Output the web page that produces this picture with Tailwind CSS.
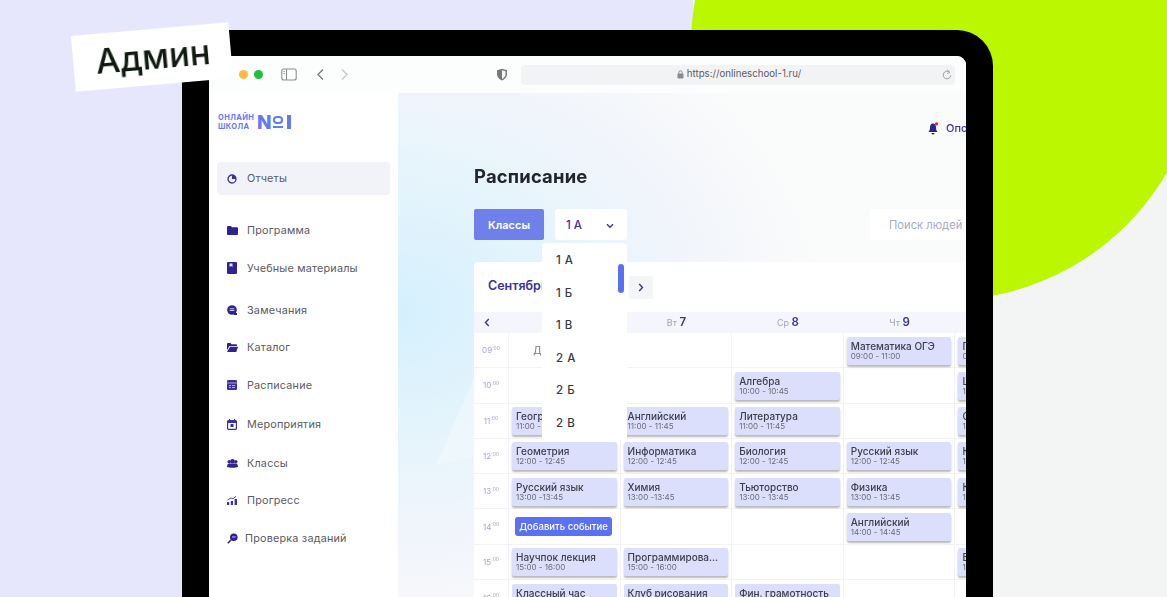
<!DOCTYPE html>
<html lang="ru">
  <head>
    <meta charset="UTF-8" />
    <script src="https://cdn.jsdelivr.net/npm/@tailwindcss/browser@4"></script>
    <title>Админ</title>
  </head>
  <body class="relative h-[597px] w-[1167px] overflow-hidden bg-[#e6e7fc] font-['Inter',sans-serif]">
    <!-- background shapes -->
    <div class="absolute inset-y-0 left-[693px] right-0 bg-[#f3f5f5]"></div>
    <div class="absolute left-[691px] top-[-210px] h-[510px] w-[510px] rounded-full bg-[#baf700]"></div>

    <!-- tablet -->
    <div class="absolute left-[182px] top-[30px] h-[567px] w-[811px] rounded-t-[36px] bg-black pl-[27px] pr-[27px] pt-[26px]">
      <div class="h-full w-full overflow-hidden rounded-t-[9px] bg-white blur-[0.35px]">
        <!-- browser bar -->
        <div class="flex h-[37px] items-center bg-[#fcfdfd] pl-[30px] pr-[11px]">
          <span class="h-[9px] w-[9px] rounded-full bg-[#fdbc40]"></span>
          <span class="ml-[6px] h-[9px] w-[9px] rounded-full bg-[#1fc13a]"></span>
          <svg class="ml-[18px] text-[#8e8e90]" width="16" height="13" viewBox="0 0 16 13" fill="none" stroke="currentColor" stroke-width="1.1"><rect x="0.8" y="1" width="14.4" height="11" rx="2"/><path d="M5.5 1v11"/><path d="M2.4 3.5h1.5M2.4 5.5h1.5" stroke-width="0.9"/></svg>
          <svg class="ml-[19px] text-[#77777a]" width="9" height="13" viewBox="0 0 9 13" fill="none" stroke="currentColor" stroke-width="1.3"><path d="M7 1.5 2 6.500l5 5"/></svg>
          <svg class="ml-[15px] text-[#c6c6c8]" width="9" height="13" viewBox="0 0 9 13" fill="none" stroke="currentColor" stroke-width="1.3"><path d="M2 1.500 7 6.500l-5 5"/></svg>
          <svg class="ml-[147px]" width="12" height="13" viewBox="0 0 12 13"><path d="M6 .8 11 2.300v4c0 3-2.300 5.200-5 6.200-2.700-1-5-3.200-5-6.200v-4z" fill="#77777a"/><path d="M6 2.200 9.500 3.300v3c0 2.200-1.600 3.800-3.500 4.700z" fill="#f4f4f4"/></svg>
          <div class="relative ml-[13px] flex h-[20px] flex-1 items-center justify-center rounded-[4px] bg-[#f2f3f4] pl-[2px] text-[9.7px] text-[#5d5d60]">
            <svg class="mr-[3px]" width="7" height="9" viewBox="0 0 7 9"><rect x="0.500" y="3.600" width="6" height="5" rx="1" fill="#8a8a8d"/><path d="M1.800 3.800V2.500a1.700 1.700 0 0 1 3.400 0v1.300" fill="none" stroke="#8a8a8d"/></svg>
            <span>https://onlineschool-1.ru/</span>
            <svg class="absolute right-[3px] top-[4px] text-[#9a9a9d]" width="10" height="12" viewBox="0 0 10 12" fill="none" stroke="currentColor" stroke-width="1"><path d="M7.700 3.300A3.800 3.800 0 1 0 8.800 6.500"/><path d="M5 .8 7.800 3.200 5 4.800" stroke-width="0.800"/></svg>
          </div>
        </div>

        <div class="flex h-full">
          <!-- sidebar -->
          <aside class="w-[189px] shrink-0 bg-white pl-[8px] pr-[8px] text-[10.8px] tracking-[0.2px] text-[#5a5a64]">
            <div class="mt-[18px] flex h-[22px] items-center pl-[1px] text-[#6479f5]">
              <div class="w-[39px] text-[7.5px] font-bold leading-[9.500px] tracking-[0.4px]">ОНЛАЙН<br />ШКОЛА</div>
              <span class="text-[19px] font-extrabold leading-none">N</span>
              <div class="ml-[1px] flex flex-col gap-[2px]">
                <span class="h-[8px] w-[10px] rounded-full border-2 border-[#6479f5]"></span>
                <span class="h-[2px] w-[10px] bg-[#6479f5]"></span>
              </div>
              <span class="ml-[4px] h-[14px] w-[4px] bg-[#6479f5]"></span>
            </div>

            <div class="mt-[29px] flex h-[33px] items-center rounded-[4px] bg-[#f2f3f9] pl-[10px]">
              <svg width="10" height="10" viewBox="0 0 10 10" class="mr-[10px]"><circle cx="5" cy="5" r="4" fill="none" stroke="#3a2f9f" stroke-width="1.300"/><path d="M5 1a4 4 0 0 1 4 4H5z" fill="#3a2f9f"/></svg>
              <span class="mt-[2px]">Отчеты</span>
            </div>

            <div class="mt-[25px] flex h-[20px] items-center pl-[10px]">
              <svg width="11" height="9" viewBox="0 0 11 9" class="mr-[9px]"><path d="M0 1a1 1 0 0 1 1-1h3l1 1.300h5a1 1 0 0 1 1 1V8a1 1 0 0 1-1 1H1a1 1 0 0 1-1-1z" fill="#2f2391"/></svg>
              <span class="mt-[2px]">Программа</span>
            </div>
            <div class="mt-[18px] flex h-[20px] items-center pl-[10px]">
              <svg width="10" height="12" viewBox="0 0 10 12" class="mr-[10px]"><path d="M1 0h8a1 1 0 0 1 1 1v10a1 1 0 0 1-1 1H1a1 1 0 0 1-1-1V1a1 1 0 0 1 1-1z" fill="#2f2391"/><path d="M2.500 1.500h3V5L4 4 2.500 5z" fill="#e8e8fb"/></svg>
              <span class="mt-[2px]">Учебные материалы</span>
            </div>
            <div class="mt-[22px] flex h-[20px] items-center pl-[10px]">
              <svg width="10" height="10" viewBox="0 0 10 10" class="mr-[10px]"><circle cx="5" cy="5" r="4.800" fill="#2f2391"/><path d="M7 8h3v2H7z" fill="#2f2391"/><path d="M2.700 3.800h4.600M2.700 5.500h4.600" stroke="#dcdcf5" stroke-width="0.900"/></svg>
              <span class="mt-[2px]">Замечания</span>
            </div>
            <div class="mt-[17px] flex h-[20px] items-center pl-[10px]">
              <svg width="11" height="9" viewBox="0 0 11 9" class="mr-[9px]"><path d="M0 1a1 1 0 0 1 1-1h2.500L4.500 1.200H9a1 1 0 0 1 1 1V3H2.500L0 7z" fill="#2f2391"/><path d="M3 3.800h8L9.300 9H0z" fill="#2f2391"/></svg>
              <span class="mt-[2px]">Каталог</span>
            </div>
            <div class="mt-[18px] flex h-[20px] items-center pl-[10px]">
              <svg width="10" height="10" viewBox="0 0 10 10" class="mr-[10px]"><rect width="10" height="10" rx="1.200" fill="#3a2f9f"/><path d="M0 3h10" stroke="#cfcff2" stroke-width="0.700"/><path d="M2 5.500h2M5 5.500h3M2 7.500h2M5 7.500h3" stroke="#cfcff2" stroke-width="0.800"/></svg>
              <span class="mt-[2px]">Расписание</span>
            </div>
            <div class="mt-[19px] flex h-[20px] items-center pl-[10px]">
              <svg width="10" height="11" viewBox="0 0 10 11" class="mr-[10px]"><path d="M2.500 0v2M7.500 0v2" stroke="#3a2f9f" stroke-width="1.200"/><rect x="0.600" y="1.600" width="8.800" height="8.800" rx="1" fill="none" stroke="#3a2f9f" stroke-width="1.200"/><path d="M0 2h10v2H0z" fill="#3a2f9f"/><rect x="3.500" y="5" width="3" height="3" fill="#3a2f9f"/></svg>
              <span class="mt-[2px]">Мероприятия</span>
            </div>
            <div class="mt-[19px] flex h-[20px] items-center pl-[10px]">
              <svg width="11" height="9" viewBox="0 0 11 9" class="mr-[9px]" fill="#2f2391"><circle cx="2.200" cy="2.800" r="1.700"/><circle cx="8.800" cy="2.800" r="1.700"/><circle cx="5.500" cy="2.200" r="2.200"/><path d="M0 8c0-2.500 1-3.500 2.500-3.500h6C10 4.500 11 5.500 11 8c-2 1-9 1-11 0z"/></svg>
              <span class="mt-[2px]">Классы</span>
            </div>
            <div class="mt-[17px] flex h-[20px] items-center pl-[10px]">
              <svg width="10" height="9" viewBox="0 0 10 9" class="mr-[10px]" fill="#3a2f9f"><path d="M0 6h2.200v3H0zM3.800 5h2.200v4H3.800zM7.600 3h2.400v6H7.600z"/><path d="M.5 4 4 2l2 .8L9 .3" stroke="#3a2f9f" stroke-width="0.900" fill="none"/></svg>
              <span class="mt-[2px]">Прогресс</span>
            </div>
            <div class="mt-[18px] flex h-[20px] items-center pl-[10px]">
              <svg width="11" height="11" viewBox="0 0 11 11" class="mr-[7px]"><circle cx="6.800" cy="4.200" r="3.800" fill="#2f2391"/><path d="M4 7 .8 10.300" stroke="#2f2391" stroke-width="1.500"/><path d="M5 4h3.600" stroke="#dcdcf5" stroke-width="0.900"/></svg>
              <span class="mt-[2px]">Проверка заданий</span>
            </div>
          </aside>

          <!-- main -->
          <main class="relative flex-1 overflow-hidden bg-[radial-gradient(ellipse_430px_340px_at_0%_40%,#d4f0fd_0%,#e4f4fc_35%,#f2f5fb_70%,#fafbfb_100%)] pl-[76px]">
            <svg class="absolute left-0 top-[200px]" width="76" height="200" viewBox="0 0 76 200"><path d="M76 85V165L38 172z" fill="#ffffff" fill-opacity="0.3"/></svg>
            <div class="absolute left-[530px] top-[27px] flex items-center whitespace-nowrap text-[11px] font-medium text-[#3b31a3]">
              <svg width="11" height="13" viewBox="0 0 11 13" class="mr-[7px]"><path d="M5 1.500C2.800 1.500 2 3.500 2 5.500c0 2-.7 3.500-1.500 4.500h9C8.700 9 8 7.500 8 5.500c0-2-.8-4-3-4z" fill="#2f2391"/><path d="M3.500 11h3a1.500 1.500 0 0 1-3 0z" fill="#2f2391"/><circle cx="8.500" cy="1.800" r="1.600" fill="#f01c2c"/></svg>
              <span>Оповещения</span>
            </div>
            <h1 class="relative mt-[71px] text-[18.400px] font-bold leading-[24px] tracking-[0.2px] text-[#24242c]">Расписание</h1>
            <div class="relative mt-[21px] flex h-[31px]">
              <div class="flex w-[70px] shrink-0 items-center justify-center rounded-[2px] bg-[#6f80ea] pt-[2px] text-[11px] font-semibold text-white">Классы</div>
              <div class="ml-[11px] flex w-[72px] shrink-0 items-center justify-between rounded-[3px] bg-white pl-[11px] pr-[13px] pt-[2px] text-[11.5px] font-medium text-[#3b31a3]">
                <span>1 А</span>
                <svg width="8" height="6" viewBox="0 0 8 6" fill="none" stroke="#3b31a3" stroke-width="1.400"><path d="M1 1.200 4 4.200l3-3"/></svg>
              </div>
              <div class="ml-[243px] flex w-[120px] shrink-0 items-center rounded-[3px] bg-white pl-[19px] pt-[2px] text-[11.2px] text-[#a9a9cc]">Поиск людей</div>
            </div>

            <!-- calendar -->
            <section class="relative mt-[22px] w-[560px] rounded-[4px] bg-white">
              <div class="flex h-[50px] items-center pl-[14px]">
                <span class="mb-[2px] w-[141px] text-[12.5px] font-semibold text-[#3b31a3]">Сентябрь</span>
                <span class="flex h-[23px] w-[24px] items-center justify-center rounded-[3px] bg-[#f4f5f8]">
                  <svg width="6" height="9" viewBox="0 0 6 9" fill="none" stroke="#3b31a3" stroke-width="1.400"><path d="M1.200 1 4.500 4.500 1.200 8"/></svg>
                </span>
              </div>
              <div class="grid h-[21px] grid-cols-[35px_repeat(5,111.600px)] items-center bg-[#f4f5fd] text-center text-[9px] text-[#a3a3b5]">
                <svg class="ml-[10px]" width="6" height="9" viewBox="0 0 6 9" fill="none" stroke="#3b31a3" stroke-width="1.400"><path d="M4.800 1 1.500 4.500 4.800 8"/></svg>
                <span>Пн <b class="text-[11.5px] font-semibold text-[#3b31a3]">6</b></span>
                <span>Вт <b class="text-[11.5px] font-semibold text-[#3b31a3]">7</b></span>
                <span>Ср <b class="text-[11.5px] font-semibold text-[#3b31a3]">8</b></span>
                <span>Чт <b class="text-[11.5px] font-semibold text-[#3b31a3]">9</b></span>
                <span>Пт <b class="text-[11.5px] font-semibold text-[#3b31a3]">10</b></span>
              </div>
              <div class="grid auto-rows-[35.300px] grid-cols-[35px_repeat(5,111.600px)]">
                <div class="flex h-full items-center justify-center border-r border-b border-[#f3f3f7] text-[8px] text-[#a5a4cd]">09<sup class="text-[5px]">:00</sup></div>
                <div class="flex items-center justify-center border-r border-b border-[#f3f3f7] pr-[38px] text-[10px] text-[#77777f]">Дата</div>
                <div class="border-r border-b border-[#f3f3f7]"></div>
                <div class="border-r border-b border-[#f3f3f7]"></div>
                <div class="border-r border-b border-[#f3f3f7] px-[3px] pt-[3.500px]"><div class="h-[28px] rounded-[2px] bg-[#dcdffb] pl-[4px] pt-[3px] text-[10px] font-medium leading-[12px] text-[#3d3d4c] shadow-[0_2px_2px_rgba(0,0,0,0.28)]">Математика ОГЭ<p class="text-[8px] font-normal leading-[9px] text-[#6a6a78]">09:00 - 11:00</p></div></div>
                <div class="border-b border-[#f3f3f7] px-[3px] pt-[3.500px]"><div class="h-[28px] rounded-[2px] bg-[#dcdffb] pl-[4px] pt-[3px] text-[10px] font-medium leading-[12px] text-[#3d3d4c] shadow-[0_2px_2px_rgba(0,0,0,0.28)]">Программа<p class="text-[8px] font-normal leading-[9px] text-[#6a6a78]">09:00 - 09:45</p></div></div>

                <div class="flex h-full items-center justify-center border-r border-b border-[#f3f3f7] text-[8px] text-[#a5a4cd]">10<sup class="text-[5px]">:00</sup></div>
                <div class="border-r border-b border-[#f3f3f7]"></div>
                <div class="border-r border-b border-[#f3f3f7]"></div>
                <div class="border-r border-b border-[#f3f3f7] px-[3px] pt-[3.500px]"><div class="h-[28px] rounded-[2px] bg-[#dcdffb] pl-[4px] pt-[3px] text-[10px] font-medium leading-[12px] text-[#3d3d4c] shadow-[0_2px_2px_rgba(0,0,0,0.28)]">Алгебра<p class="text-[8px] font-normal leading-[9px] text-[#6a6a78]">10:00 - 10:45</p></div></div>
                <div class="border-r border-b border-[#f3f3f7]"></div>
                <div class="border-b border-[#f3f3f7] px-[3px] pt-[3.500px]"><div class="h-[28px] rounded-[2px] bg-[#dcdffb] pl-[4px] pt-[3px] text-[10px] font-medium leading-[12px] text-[#3d3d4c] shadow-[0_2px_2px_rgba(0,0,0,0.28)]">Цифровая<p class="text-[8px] font-normal leading-[9px] text-[#6a6a78]">10:00 - 10:45</p></div></div>

                <div class="flex h-full items-center justify-center border-r border-b border-[#f3f3f7] text-[8px] text-[#a5a4cd]">11<sup class="text-[5px]">:00</sup></div>
                <div class="border-r border-b border-[#f3f3f7] px-[3px] pt-[3.500px]"><div class="h-[28px] rounded-[2px] bg-[#dcdffb] pl-[4px] pt-[3px] text-[10px] font-medium leading-[12px] text-[#3d3d4c] shadow-[0_2px_2px_rgba(0,0,0,0.28)]">География<p class="text-[8px] font-normal leading-[9px] text-[#6a6a78]">11:00 - 11:45</p></div></div>
                <div class="border-r border-b border-[#f3f3f7] px-[3px] pt-[3.500px]"><div class="h-[28px] rounded-[2px] bg-[#dcdffb] pl-[4px] pt-[3px] text-[10px] font-medium leading-[12px] text-[#3d3d4c] shadow-[0_2px_2px_rgba(0,0,0,0.28)]">Английский<p class="text-[8px] font-normal leading-[9px] text-[#6a6a78]">11:00 - 11:45</p></div></div>
                <div class="border-r border-b border-[#f3f3f7] px-[3px] pt-[3.500px]"><div class="h-[28px] rounded-[2px] bg-[#dcdffb] pl-[4px] pt-[3px] text-[10px] font-medium leading-[12px] text-[#3d3d4c] shadow-[0_2px_2px_rgba(0,0,0,0.28)]">Литература<p class="text-[8px] font-normal leading-[9px] text-[#6a6a78]">11:00 - 11:45</p></div></div>
                <div class="border-r border-b border-[#f3f3f7]"></div>
                <div class="border-b border-[#f3f3f7] px-[3px] pt-[3.500px]"><div class="h-[28px] rounded-[2px] bg-[#dcdffb] pl-[4px] pt-[3px] text-[10px] font-medium leading-[12px] text-[#3d3d4c] shadow-[0_2px_2px_rgba(0,0,0,0.28)]">Социология<p class="text-[8px] font-normal leading-[9px] text-[#6a6a78]">11:00 - 11:45</p></div></div>

                <div class="flex h-full items-center justify-center border-r border-b border-[#f3f3f7] text-[8px] text-[#a5a4cd]">12<sup class="text-[5px]">:00</sup></div>
                <div class="border-r border-b border-[#f3f3f7] px-[3px] pt-[3.500px]"><div class="h-[28px] rounded-[2px] bg-[#dcdffb] pl-[4px] pt-[3px] text-[10px] font-medium leading-[12px] text-[#3d3d4c] shadow-[0_2px_2px_rgba(0,0,0,0.28)]">Геометрия<p class="text-[8px] font-normal leading-[9px] text-[#6a6a78]">12:00 - 12:45</p></div></div>
                <div class="border-r border-b border-[#f3f3f7] px-[3px] pt-[3.500px]"><div class="h-[28px] rounded-[2px] bg-[#dcdffb] pl-[4px] pt-[3px] text-[10px] font-medium leading-[12px] text-[#3d3d4c] shadow-[0_2px_2px_rgba(0,0,0,0.28)]">Информатика<p class="text-[8px] font-normal leading-[9px] text-[#6a6a78]">12:00 - 12:45</p></div></div>
                <div class="border-r border-b border-[#f3f3f7] px-[3px] pt-[3.500px]"><div class="h-[28px] rounded-[2px] bg-[#dcdffb] pl-[4px] pt-[3px] text-[10px] font-medium leading-[12px] text-[#3d3d4c] shadow-[0_2px_2px_rgba(0,0,0,0.28)]">Биология<p class="text-[8px] font-normal leading-[9px] text-[#6a6a78]">12:00 - 12:45</p></div></div>
                <div class="border-r border-b border-[#f3f3f7] px-[3px] pt-[3.500px]"><div class="h-[28px] rounded-[2px] bg-[#dcdffb] pl-[4px] pt-[3px] text-[10px] font-medium leading-[12px] text-[#3d3d4c] shadow-[0_2px_2px_rgba(0,0,0,0.28)]">Русский язык<p class="text-[8px] font-normal leading-[9px] text-[#6a6a78]">12:00 - 12:45</p></div></div>
                <div class="border-b border-[#f3f3f7] px-[3px] pt-[3.500px]"><div class="h-[28px] rounded-[2px] bg-[#dcdffb] pl-[4px] pt-[3px] text-[10px] font-medium leading-[12px] text-[#3d3d4c] shadow-[0_2px_2px_rgba(0,0,0,0.28)]">Культура<p class="text-[8px] font-normal leading-[9px] text-[#6a6a78]">12:00 - 12:45</p></div></div>

                <div class="flex h-full items-center justify-center border-r border-b border-[#f3f3f7] text-[8px] text-[#a5a4cd]">13<sup class="text-[5px]">:00</sup></div>
                <div class="border-r border-b border-[#f3f3f7] px-[3px] pt-[3.500px]"><div class="h-[28px] rounded-[2px] bg-[#dcdffb] pl-[4px] pt-[3px] text-[10px] font-medium leading-[12px] text-[#3d3d4c] shadow-[0_2px_2px_rgba(0,0,0,0.28)]">Русский язык<p class="text-[8px] font-normal leading-[9px] text-[#6a6a78]">13:00 -13:45</p></div></div>
                <div class="border-r border-b border-[#f3f3f7] px-[3px] pt-[3.500px]"><div class="h-[28px] rounded-[2px] bg-[#dcdffb] pl-[4px] pt-[3px] text-[10px] font-medium leading-[12px] text-[#3d3d4c] shadow-[0_2px_2px_rgba(0,0,0,0.28)]">Химия<p class="text-[8px] font-normal leading-[9px] text-[#6a6a78]">13:00 -13:45</p></div></div>
                <div class="border-r border-b border-[#f3f3f7] px-[3px] pt-[3.500px]"><div class="h-[28px] rounded-[2px] bg-[#dcdffb] pl-[4px] pt-[3px] text-[10px] font-medium leading-[12px] text-[#3d3d4c] shadow-[0_2px_2px_rgba(0,0,0,0.28)]">Тьюторство<p class="text-[8px] font-normal leading-[9px] text-[#6a6a78]">13:00 - 13:45</p></div></div>
                <div class="border-r border-b border-[#f3f3f7] px-[3px] pt-[3.500px]"><div class="h-[28px] rounded-[2px] bg-[#dcdffb] pl-[4px] pt-[3px] text-[10px] font-medium leading-[12px] text-[#3d3d4c] shadow-[0_2px_2px_rgba(0,0,0,0.28)]">Физика<p class="text-[8px] font-normal leading-[9px] text-[#6a6a78]">13:00 - 13:45</p></div></div>
                <div class="border-b border-[#f3f3f7] px-[3px] pt-[3.500px]"><div class="h-[28px] rounded-[2px] bg-[#dcdffb] pl-[4px] pt-[3px] text-[10px] font-medium leading-[12px] text-[#3d3d4c] shadow-[0_2px_2px_rgba(0,0,0,0.28)]">Кружок<p class="text-[8px] font-normal leading-[9px] text-[#6a6a78]">13:00 - 13:45</p></div></div>

                <div class="flex h-full items-center justify-center border-r border-b border-[#f3f3f7] text-[8px] text-[#a5a4cd]">14<sup class="text-[5px]">:00</sup></div>
                <div class="border-r border-b border-[#f3f3f7] pl-[6px] pt-[7.500px]"><div class="flex h-[19px] w-[97px] items-center justify-center rounded-[3px] bg-[#5a70f5] pt-[2px] text-[9.500px] font-medium text-white">Добавить событие</div></div>
                <div class="border-r border-b border-[#f3f3f7]"></div>
                <div class="border-r border-b border-[#f3f3f7]"></div>
                <div class="border-r border-b border-[#f3f3f7] px-[3px] pt-[3.500px]"><div class="h-[28px] rounded-[2px] bg-[#dcdffb] pl-[4px] pt-[3px] text-[10px] font-medium leading-[12px] text-[#3d3d4c] shadow-[0_2px_2px_rgba(0,0,0,0.28)]">Английский<p class="text-[8px] font-normal leading-[9px] text-[#6a6a78]">14:00 - 14:45</p></div></div>
                <div class="border-b border-[#f3f3f7]"></div>

                <div class="flex h-full items-center justify-center border-r border-b border-[#f3f3f7] text-[8px] text-[#a5a4cd]">15<sup class="text-[5px]">:00</sup></div>
                <div class="border-r border-b border-[#f3f3f7] px-[3px] pt-[3.500px]"><div class="h-[28px] rounded-[2px] bg-[#dcdffb] pl-[4px] pt-[3px] text-[10px] font-medium leading-[12px] text-[#3d3d4c] shadow-[0_2px_2px_rgba(0,0,0,0.28)]">Научпок лекция<p class="text-[8px] font-normal leading-[9px] text-[#6a6a78]">15:00 - 16:00</p></div></div>
                <div class="border-r border-b border-[#f3f3f7] px-[3px] pt-[3.500px]"><div class="h-[28px] rounded-[2px] bg-[#dcdffb] pl-[4px] pt-[3px] text-[10px] font-medium leading-[12px] text-[#3d3d4c] shadow-[0_2px_2px_rgba(0,0,0,0.28)]">Программирова...<p class="text-[8px] font-normal leading-[9px] text-[#6a6a78]">15:00 - 16:00</p></div></div>
                <div class="border-r border-b border-[#f3f3f7]"></div>
                <div class="border-r border-b border-[#f3f3f7]"></div>
                <div class="border-b border-[#f3f3f7] px-[3px] pt-[3.500px]"><div class="h-[28px] rounded-[2px] bg-[#dcdffb] pl-[4px] pt-[3px] text-[10px] font-medium leading-[12px] text-[#3d3d4c] shadow-[0_2px_2px_rgba(0,0,0,0.28)]">Биология<p class="text-[8px] font-normal leading-[9px] text-[#6a6a78]">15:00 - 15:45</p></div></div>

                <div class="flex h-full items-center justify-center border-r border-[#f3f3f7] text-[8px] text-[#a5a4cd]">16<sup class="text-[5px]">:00</sup></div>
                <div class="border-r border-[#f3f3f7] px-[3px] pt-[3.500px]"><div class="h-[28px] rounded-[2px] bg-[#dcdffb] pl-[4px] pt-[3px] text-[10px] font-medium leading-[12px] text-[#3d3d4c]">Классный час</div></div>
                <div class="border-r border-[#f3f3f7] px-[3px] pt-[3.500px]"><div class="h-[28px] rounded-[2px] bg-[#dcdffb] pl-[4px] pt-[3px] text-[10px] font-medium leading-[12px] text-[#3d3d4c]">Клуб рисования</div></div>
                <div class="border-r border-[#f3f3f7] px-[3px] pt-[3.500px]"><div class="h-[28px] rounded-[2px] bg-[#dcdffb] pl-[4px] pt-[3px] text-[10px] font-medium leading-[12px] text-[#3d3d4c]">Фин. грамотность</div></div>
                <div class="border-r border-[#f3f3f7]"></div>
                <div></div>
              </div>
            </section>

            <!-- class dropdown, lies over the calendar -->
            <div class="absolute left-[144px] top-[150px] h-[197px] w-[85px] rounded-t-[4px] bg-white pl-[14px] pt-[9px] text-[11.500px] font-medium tracking-[0.5px] text-[#3a3a44]">
              <p class="h-[32.600px]">1 А</p>
              <p class="h-[32.600px]">1 Б</p>
              <p class="h-[32.600px]">1 В</p>
              <p class="h-[32.600px]">2 А</p>
              <p class="h-[32.600px]">2 Б</p>
              <p class="h-[32.600px]">2 В</p>
              <span class="absolute right-[3px] top-[21px] h-[29px] w-[6px] rounded-full bg-[#5b6ff5]"></span>
            </div>
          </main>
        </div>
      </div>
    </div>

    <!-- label -->
    <div class="absolute left-[73px] top-[29px] flex h-[56px] w-[158px] rotate-[-5deg] items-center justify-center bg-white pl-[2px] pt-[1px] text-[34.500px] font-medium leading-none text-[#111a10]">Админ</div>
  </body>
</html>
